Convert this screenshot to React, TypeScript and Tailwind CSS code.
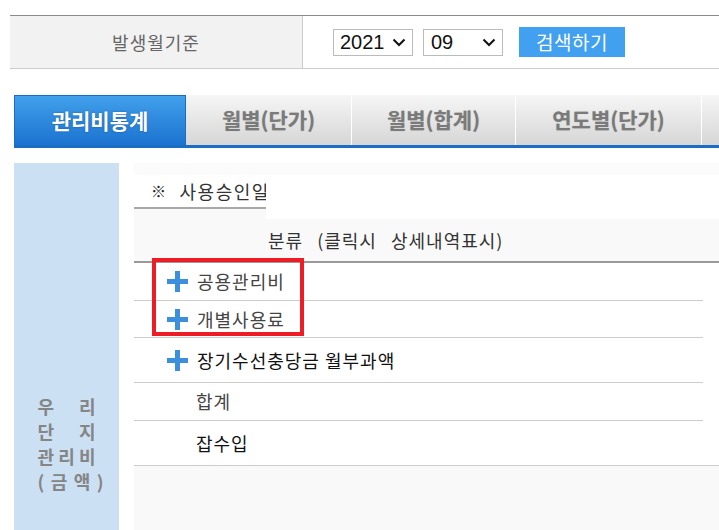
import React from "react";

const Plus = () => (
  <svg width="21" height="21" viewBox="0 0 21 21" className="shrink-0">
    <rect x="8" y="0" width="5" height="21" fill="#3b8fdc" />
    <rect x="0" y="8" width="21" height="5" fill="#3b8fdc" />
  </svg>
);

const Chevron = () => (
  <svg width="14" height="9" viewBox="0 0 14 9">
    <path d="M1.5 1.5 L7 7 L12.5 1.5" stroke="#111" strokeWidth="2" fill="none" />
  </svg>
);

const tabs = [
  { label: "월별(단가)", w: "w-[166px]" },
  { label: "월별(합계)", w: "w-[164px]" },
  { label: "연도별(단가)", w: "w-[186px]" },
  { label: "", w: "w-[120px]" },
];

export default function App() {
  return (
    <div
      className="w-[719px] h-[530px] overflow-hidden bg-white"
      style={{ fontFamily: '"Noto Sans CJK KR", "Noto Sans", sans-serif' }}
    >
      {/* search bar */}
      <div className="pt-[15px] pl-[10px]">
        <div className="flex h-[54px] border-t border-b border-t-[#8a8a8a] border-b-[#cccccc]">
          <div className="w-[293px] shrink-0 bg-[#f2f2f2] border-r border-[#cccccc] flex items-center justify-center text-[18px] tracking-[1px] text-[#666]">
            발생월기준
          </div>
          <div className="flex items-center pl-[30px]">
            <div
              className="w-[80px] h-[27px] border border-[#bbbbbb] flex items-center justify-between pl-[6px] pr-[6px] text-[20px] text-[#111]"
              style={{ fontFamily: '"Liberation Sans", Arial, sans-serif' }}
            >
              <span>2021</span>
              <Chevron />
            </div>
            <div
              className="ml-[10px] w-[80px] h-[27px] border border-[#bbbbbb] flex items-center justify-between pl-[7px] pr-[6px] text-[20px] text-[#111]"
              style={{ fontFamily: '"Liberation Sans", Arial, sans-serif' }}
            >
              <span>09</span>
              <Chevron />
            </div>
            <button className="ml-[16px] w-[106px] h-[30px] bg-[#42a0f0] text-white text-[19px] tracking-[0.5px] flex items-center justify-center">
              검색하기
            </button>
          </div>
        </div>
      </div>

      {/* tabs */}
      <div className="mt-[26px] ml-[14px] flex h-[53px] border-b-[3px] border-[#1a6dc2]">
        <div className="w-[172px] shrink-0 bg-gradient-to-b from-[#41a0ec] to-[#1b73cf] border border-b-0 border-[#1a6dc2] flex items-center justify-center text-[21px] font-bold text-white [text-shadow:0_0_2px_rgba(0,40,110,0.5)]">
          관리비통계
        </div>
        {tabs.map((t, i) => (
          <div
            key={i}
            className={`${t.w} shrink-0 bg-gradient-to-b from-[#f6f6f6] to-[#d6d6d6] border-r border-white flex items-center justify-center text-[21px] font-bold text-[#7a7a7a] [text-shadow:0_0_1px_rgba(0,0,0,0.25)]`}
          >
            {t.label}
          </div>
        ))}
      </div>

      {/* body */}
      <div className="mt-[15px] ml-[14px] flex h-[367px]">
        <div className="w-[105px] shrink-0 bg-[#cce0f4] flex flex-col justify-end pb-[36px] items-center text-[18px] font-bold text-[#858585] leading-[25px]">
          <div className="w-[58px] flex justify-between">
            <span>우</span>
            <span>리</span>
          </div>
          <div className="w-[58px] flex justify-between">
            <span>단</span>
            <span>지</span>
          </div>
          <div className="w-[58px] flex justify-between">
            <span>관</span>
            <span>리</span>
            <span>비</span>
          </div>
          <div className="w-[66px] flex justify-between ml-[8px]">
            <span>(</span>
            <span>금</span>
            <span>액</span>
            <span>)</span>
          </div>
        </div>

        <div className="ml-[15px] flex-1 flex flex-col">
          <div className="h-[12px] bg-[#fbfbfb]" />
          <div className="w-[132px] h-[34px] border-b-2 border-[#a8a8a8] overflow-hidden whitespace-nowrap flex items-center pl-[17px] text-[18px] tracking-[1.5px] text-[#333]">
            <span className="text-[15px] font-bold mr-[12px] text-[#222]">※</span>
            <span>사용승인일</span>
          </div>
          <div className="flex h-[10px]">
            <div className="w-[132px] bg-[#f9f9f9]" />
          </div>
          <div className="h-[44px] bg-[#f9f9f9] border-b-2 border-[#9a9a9a] flex items-center pl-[134px] text-[18px] text-[#333] [word-spacing:9px] tracking-[1px] whitespace-nowrap">
            분류 (클릭시 상세내역표시)
          </div>

          <div className="relative w-[569px] text-[18px] tracking-[1px]">
            <div className="absolute left-[18px] top-[-5px] w-[152px] h-[78px] border-[4px] border-[#ee1c25]" />
            <div className="h-[38px] border-b border-[#cccccc] flex items-center pl-[33px] gap-[9px] text-[#444]">
              <Plus />
              <span>공용관리비</span>
            </div>
            <div className="h-[37px] border-b border-[#cccccc] flex items-center pl-[33px] gap-[9px] text-[#444]">
              <Plus />
              <span>개별사용료</span>
            </div>
            <div className="h-[45px] border-b border-[#cccccc] flex items-center pl-[33px] gap-[9px] text-[#111]">
              <Plus />
              <span>장기수선충당금 월부과액</span>
            </div>
            <div className="h-[38px] border-b border-[#cccccc] flex items-center pl-[62px] text-[#444]">
              합계
            </div>
            <div className="h-[44px] flex items-center pl-[62px] text-[#111]">
              잡수입
            </div>
          </div>
          <div className="flex-1 bg-[#f9f9f9] border-t border-[#cccccc]" />
        </div>
      </div>
    </div>
  );
}
